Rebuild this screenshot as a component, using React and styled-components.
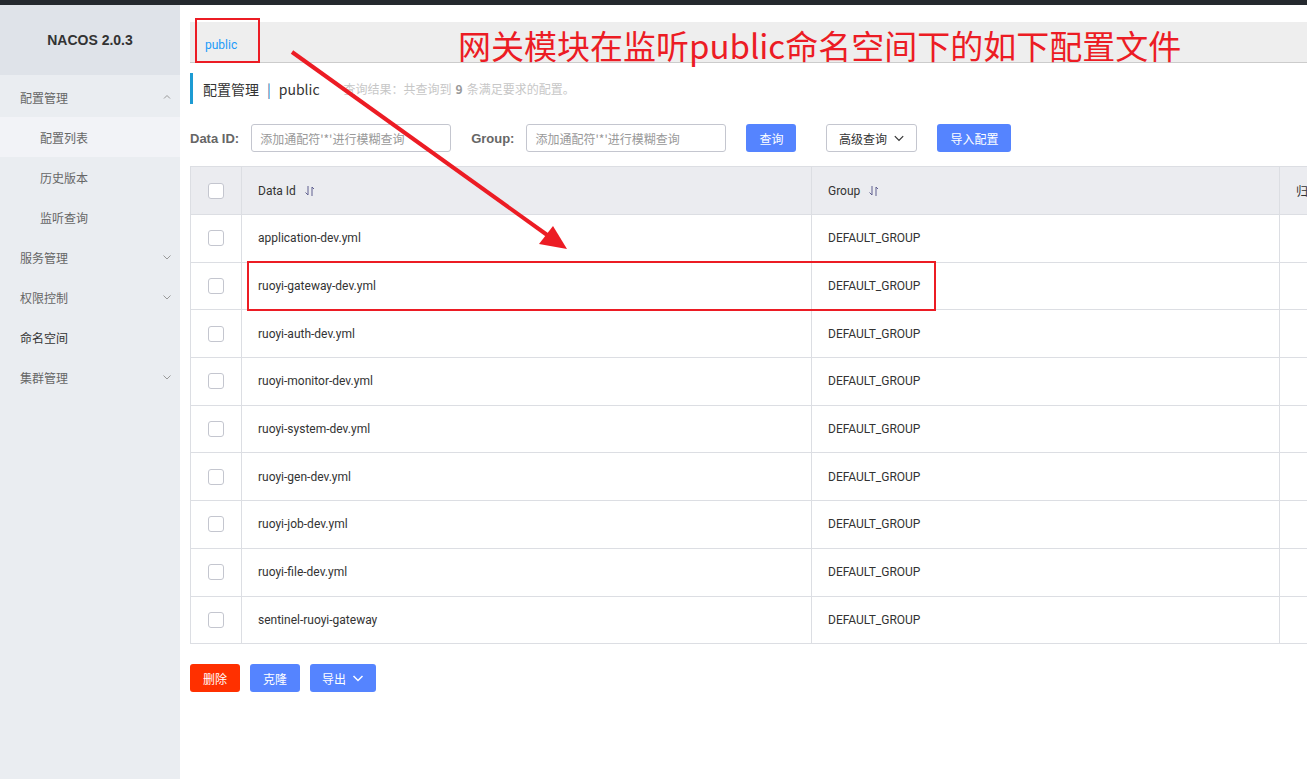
import React from "react"
import styled, { createGlobalStyle } from "styled-components"

const GlobalStyle = createGlobalStyle`
  html, body {
    margin: 0;
    padding: 0;
    width: 1307px;
    height: 779px;
    overflow: hidden;
    background: #fff;
    font-family: Roboto, "Noto Sans CJK SC", sans-serif;
  }
`

const Page = styled.div`
  position: relative;
  width: 1307px;
  height: 779px;
  overflow: hidden;
  display: flex;
  flex-direction: column;
`

const TopStrip = styled.div`
  height: 5px;
  background: #24292e;
  flex-shrink: 0;
`

const Body = styled.div`
  display: flex;
  flex: 1;
  min-height: 0;
`

const Sidebar = styled.div`
  width: 180px;
  flex-shrink: 0;
  background: #eaedf1;
  display: flex;
  flex-direction: column;
`

const Logo = styled.div`
  height: 70px;
  background: #dfe3e9;
  display: flex;
  align-items: center;
  justify-content: center;
  font-family: "Liberation Sans", Arial, sans-serif;
  font-weight: bold;
  font-size: 14px;
  color: #333;
  margin-bottom: 2px;
`

const MenuItem = styled.div`
  height: 40px;
  display: flex;
  align-items: center;
  justify-content: space-between;
  padding: 0 8px 0 ${p => (p.$sub ? 40 : 20)}px;
  font-size: 12px;
  color: ${p => (p.$dark ? "#333" : "#666")};
  background: ${p => (p.$active ? "#f2f3f7" : "transparent")};
  font-family: "Noto Sans CJK SC", sans-serif;
`

const Chevron = ({ up, color = "#999", size = 10 }) => (
  <svg width={size} height={size} viewBox="0 0 10 10">
    <path d={up ? "M2 6.5 L5 3.5 L8 6.5" : "M1.5 3.5 L5 7 L8.5 3.5"} fill="none" stroke={color} strokeWidth="1" />
  </svg>
)

const Main = styled.div`
  flex: 1;
  min-width: 0;
  padding: 17px 0 0 10px;
  overflow: hidden;
`

const NamespaceBar = styled.div`
  height: 40px;
  background: #eeeeee;
  border-bottom: 1px solid #cccccc;
  display: flex;
  align-items: center;
  padding: 0 0 0 15px;
  margin-bottom: 10px;
`

const NsLink = styled.span`
  font-size: 12px;
  color: #209bfa;
  margin-top: 6px;
`

const TitleRow = styled.div`
  height: 31px;
  border-left: 3px solid #1d9bd3;
  display: flex;
  align-items: center;
  padding-left: 10px;
  gap: 24px;
`

const Title = styled.span`
  font-size: 14px;
  color: #333;
  font-family: "Noto Sans CJK SC", sans-serif;
  span { color: #1d6fa8; margin: 0 8px; }
`

const QueryInfo = styled.span`
  font-size: 12px;
  color: #c7c7c7;
  font-family: "Noto Sans CJK SC", sans-serif;
  b { color: #999; margin: 0 4px; }
`

const SearchRow = styled.div`
  display: flex;
  align-items: center;
  margin-top: 20px;
  height: 28px;
`

const Label = styled.span`
  font-size: 13px;
  font-weight: bold;
  color: #666;
  margin-right: ${p => p.$mr}px;
  font-family: "Liberation Sans", Arial, sans-serif;
`

const Input = styled.div`
  width: 190px;
  height: 26px;
  border: 1px solid #c4c6cf;
  border-radius: 3px;
  display: flex;
  align-items: center;
  padding-left: 8px;
  box-sizing: content-box;
  font-size: 12px;
  color: #999;
  margin-right: 20px;
  font-family: "Noto Sans CJK SC", sans-serif;
`

const Button = styled.div`
  height: 28px;
  box-sizing: border-box;
  border-radius: 3px;
  display: flex;
  align-items: center;
  gap: 6px;
  font-size: 12px;
  font-family: "Noto Sans CJK SC", sans-serif;
  margin-right: ${p => p.$mr || 0}px;
  background: ${p => p.$bg || "#5584ff"};
  color: ${p => (p.$plain ? "#333" : "#fff")};
  border: ${p => (p.$plain ? "1px solid #c4c6cf" : "none")};
  width: ${p => p.$w}px;
  justify-content: center;
`

const Table = styled.div`
  margin-top: 14px;
  width: 1200px;
  border: 1px solid #dcdee3;
  border-right: none;
`

const Row = styled.div`
  display: grid;
  grid-template-columns: 50px 570px 468px 1fr;
  height: ${p => (p.$head ? "47px" : "47.7px")};
  background: ${p => (p.$head ? "#ebecf0" : "#fff")};
  border-top: ${p => (p.$head ? "none" : "1px solid #dcdee3")};
  box-sizing: border-box;
`

const Cell = styled.div`
  display: flex;
  align-items: center;
  padding-left: ${p => (p.$check ? 0 : 16)}px;
  justify-content: ${p => (p.$check ? "center" : "flex-start")};
  border-left: ${p => (p.$first ? "none" : "1px solid #dcdee3")};
  font-size: 12px;
  color: #333;
  gap: 8px;
  white-space: nowrap;
  overflow: hidden;
  font-family: Roboto, "Noto Sans CJK SC", sans-serif;
`

const Checkbox = styled.div`
  width: 14px;
  height: 14px;
  border: 1px solid #c4c6cf;
  border-radius: 3px;
  background: #fff;
`

const SortIcon = () => (
  <svg width="12" height="12" viewBox="0 0 12 12">
    <path d="M4 1 V10 M1.5 7.5 L4 10" fill="none" stroke="#5f5f8f" strokeWidth="1" />
    <path d="M8 11 V2 L10 4" fill="none" stroke="#5f5f8f" strokeWidth="1" />
  </svg>
)

const Footer = styled.div`
  display: flex;
  margin-top: 20px;
  gap: 10px;
`

const Annotation = styled.div`
  position: absolute;
  left: 458px;
  top: 25px;
  font-size: 33px;
  line-height: 40px;
  color: #ec1c24;
  font-family: "Noto Sans CJK SC", sans-serif;
  white-space: nowrap;
`

const Overlay = styled.svg`
  position: absolute;
  left: 0;
  top: 0;
  pointer-events: none;
`

const rows = [
  "application-dev.yml",
  "ruoyi-gateway-dev.yml",
  "ruoyi-auth-dev.yml",
  "ruoyi-monitor-dev.yml",
  "ruoyi-system-dev.yml",
  "ruoyi-gen-dev.yml",
  "ruoyi-job-dev.yml",
  "ruoyi-file-dev.yml",
  "sentinel-ruoyi-gateway",
]

export default function App() {
  return (
    <Page>
      <GlobalStyle />
      <TopStrip />
      <Body>
        <Sidebar>
          <Logo>NACOS 2.0.3</Logo>
          <MenuItem>配置管理 <Chevron up /></MenuItem>
          <MenuItem $sub $active>配置列表</MenuItem>
          <MenuItem $sub>历史版本</MenuItem>
          <MenuItem $sub>监听查询</MenuItem>
          <MenuItem>服务管理 <Chevron /></MenuItem>
          <MenuItem>权限控制 <Chevron /></MenuItem>
          <MenuItem $dark>命名空间</MenuItem>
          <MenuItem>集群管理 <Chevron /></MenuItem>
        </Sidebar>
        <Main>
          <NamespaceBar>
            <NsLink>public</NsLink>
          </NamespaceBar>
          <TitleRow>
            <Title>配置管理<span>|</span>public</Title>
            <QueryInfo>查询结果：共查询到<b>9</b>条满足要求的配置。</QueryInfo>
          </TitleRow>
          <SearchRow>
            <Label $mr={12}>Data ID:</Label>
            <Input>添加通配符'*'进行模糊查询</Input>
            <Label $mr={12}>Group:</Label>
            <Input>添加通配符'*'进行模糊查询</Input>
            <Button $w={50} $mr={30}>查询</Button>
            <Button $plain $bg="#fff" $w={91} $mr={20}>高级查询 <Chevron color="#333" size={12} /></Button>
            <Button $w={74}>导入配置</Button>
          </SearchRow>
          <Table>
            <Row $head>
              <Cell $check $first><Checkbox /></Cell>
              <Cell>Data Id <SortIcon /></Cell>
              <Cell>Group <SortIcon /></Cell>
              <Cell>归属</Cell>
            </Row>
            {rows.map(r => (
              <Row key={r}>
                <Cell $check $first><Checkbox /></Cell>
                <Cell>{r}</Cell>
                <Cell>DEFAULT_GROUP</Cell>
                <Cell />
              </Row>
            ))}
          </Table>
          <Footer>
            <Button $bg="#ff3000" $w={50}>删除</Button>
            <Button $w={50}>克隆</Button>
            <Button $w={66}>导出 <svg width="12" height="12" viewBox="0 0 12 12"><path d="M1.5 4 L6 8.5 L10.5 4" fill="none" stroke="#fff" strokeWidth="1.5" /></svg></Button>
          </Footer>
        </Main>
      </Body>
      <Annotation>网关模块在监听public命名空间下的如下配置文件</Annotation>
      <Overlay width="1307" height="779">
        <rect x="196" y="19" width="63" height="43" fill="none" stroke="#ec1c24" strokeWidth="2" />
        <rect x="248" y="262" width="687" height="48" fill="none" stroke="#ec1c24" strokeWidth="2" />
        <line x1="292" y1="52" x2="550" y2="237" stroke="#ec1c24" strokeWidth="4" />
        <polygon points="567,249 539,244 553,226" fill="#ec1c24" />
      </Overlay>
    </Page>
  )
}
